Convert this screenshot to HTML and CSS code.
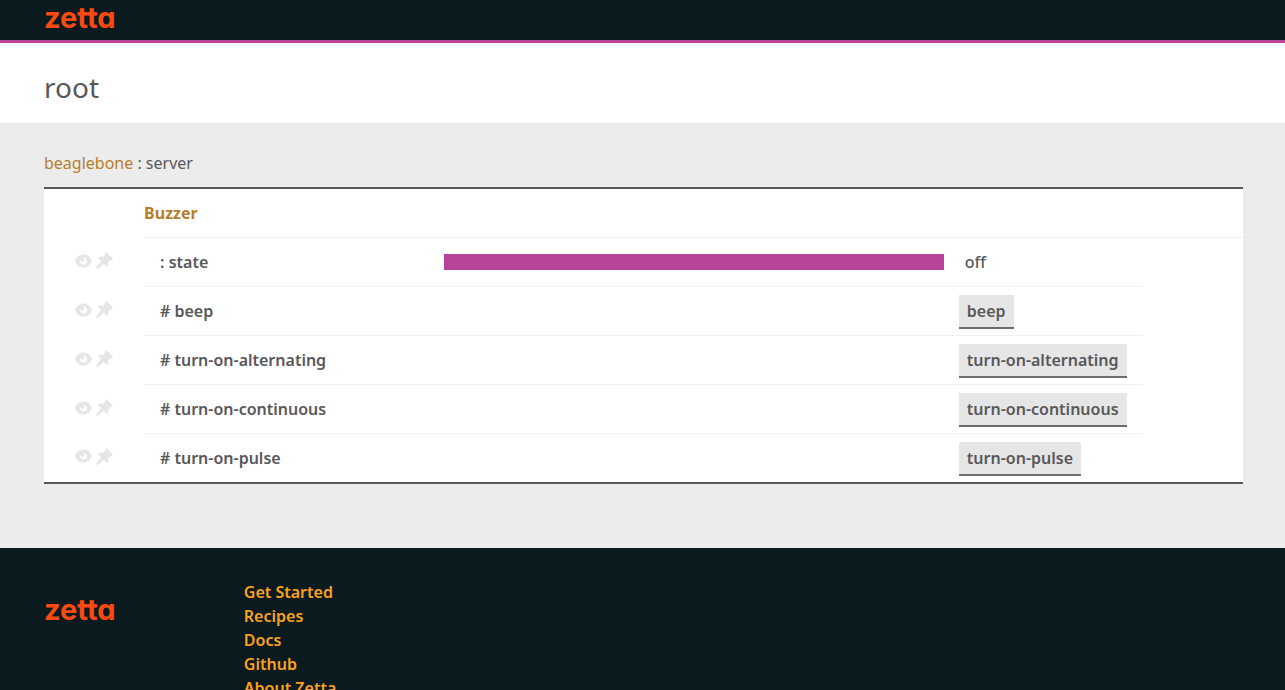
FILE: index.html
```html
<!DOCTYPE html>
<html lang="en">
<head>
<meta charset="utf-8">
<meta name="viewport" content="width=device-width, initial-scale=1">
<title>root</title>
<link rel="stylesheet" href="styles.css">
</head>
<body>
<svg class="sprite" aria-hidden="true">
  <symbol id="eye" viewBox="0 0 17 14">
    <path fill-rule="evenodd" d="M8.500 0.500C4.500 0.500 1.500 3 0 7C1.500 11 4.500 13.500 8.500 13.500S15.500 11 17 7C15.500 3 12.500 0.500 8.500 0.500ZM9 3.500A3.500 3.500 0 1 1 5 7.500Q5 6.500 5.500 6A2 2 0 1 0 8 3.700Q8.500 3.500 9 3.500Z"/>
  </symbol>
  <symbol id="pin" viewBox="0 0 17 17">
    <path d="M10.500 0L17 6.500L15.700 8.300L14.500 8L12.200 10.500C12.700 12.500 12.200 13.700 11 15L7.700 11.800L3 16L0 17L1 14L5.200 9.300L2 6C3.500 4.700 5 4.300 7 4.800L9.200 2.500L9 1.300Z"/>
  </symbol>
</svg>
<header class="topbar"><a class="logo" href="#"><svg class="wordmark" viewBox="0 0 72 36"><text x="0" y="28">zetta</text><path d="M35 14H52"/></svg></a></header>
<div class="heading"><h1 class="title">root</h1></div>
<main class="content">
  <p class="crumb"><a class="link" href="#">beaglebone</a> : server</p>
  <table class="device">
    <colgroup><col class="col-tools"><col class="col-name"><col class="col-graph"><col class="col-action"><col class="col-end"></colgroup>
    <thead>
      <tr><td></td><th class="device-name" colspan="4" scope="colgroup"><a class="link" href="#">Buzzer</a></th></tr>
    </thead>
    <tbody>
      <tr>
        <td><div class="tools"><button class="tool" aria-label="Show state"><svg class="eye"><use href="#eye"/></svg></button><button class="tool" aria-label="Pin state"><svg class="pin"><use href="#pin"/></svg></button></div></td>
        <th class="name line" scope="row">: state</th><td class="line"><div class="bar"></div></td><td class="line value">off</td><td></td>
      </tr>
      <tr>
        <td><div class="tools"><button class="tool" aria-label="Show beep"><svg class="eye"><use href="#eye"/></svg></button><button class="tool" aria-label="Pin beep"><svg class="pin"><use href="#pin"/></svg></button></div></td>
        <th class="name line" scope="row"><span class="hash">#</span>beep</th><td class="line"></td><td class="line action"><button class="run">beep</button></td><td></td>
      </tr>
      <tr>
        <td><div class="tools"><button class="tool" aria-label="Show turn-on-alternating"><svg class="eye"><use href="#eye"/></svg></button><button class="tool" aria-label="Pin turn-on-alternating"><svg class="pin"><use href="#pin"/></svg></button></div></td>
        <th class="name line" scope="row"><span class="hash">#</span>turn-on-alternating</th><td class="line"></td><td class="line action"><button class="run">turn-on-alternating</button></td><td></td>
      </tr>
      <tr>
        <td><div class="tools"><button class="tool" aria-label="Show turn-on-continuous"><svg class="eye"><use href="#eye"/></svg></button><button class="tool" aria-label="Pin turn-on-continuous"><svg class="pin"><use href="#pin"/></svg></button></div></td>
        <th class="name line" scope="row"><span class="hash">#</span>turn-on-continuous</th><td class="line"></td><td class="line action"><button class="run">turn-on-continuous</button></td><td></td>
      </tr>
      <tr>
        <td><div class="tools"><button class="tool" aria-label="Show turn-on-pulse"><svg class="eye"><use href="#eye"/></svg></button><button class="tool" aria-label="Pin turn-on-pulse"><svg class="pin"><use href="#pin"/></svg></button></div></td>
        <th class="name" scope="row"><span class="hash">#</span>turn-on-pulse</th><td></td><td class="action"><button class="run">turn-on-pulse</button></td><td></td>
      </tr>
    </tbody>
  </table>
</main>
<footer class="footer">
  <a class="logo" href="#"><svg class="wordmark" viewBox="0 0 72 36"><text x="0" y="28">zetta</text><path d="M35 14H52"/></svg></a>
  <nav class="links"><a href="#">Get Started</a><a href="#">Recipes</a><a href="#">Docs</a><a href="#">Github</a><a href="#">About Zetta</a></nav>
</footer>
</body>
</html>
```
FILE: styles.css
```css
* { box-sizing: border-box; }
html { scrollbar-width: none; }
body {
  margin: 0;
  background: #ececec;
  color: #58585a;
  font: 400 16px/24px "Noto Sans", sans-serif;
}
a { text-decoration: none; }
.sprite { display: none; }
.topbar {
  height: 43px;
  padding: 0 44px;
  background: #0b1a1f;
  border-bottom: 3px solid #b9429b;
}
.logo { display: block; }
.wordmark {
  display: block;
  width: 72px;
  height: 36px;
  fill: #f84a12;
  font: 700 29px Inter, sans-serif;
  font-feature-settings: "cv11";
}
.wordmark path { stroke: #f84a12; stroke-width: 3px; stroke-linecap: round; }
.heading { padding: 24px 44px 16px; background: #fff; }
.title { margin: 0; font-size: 28px; line-height: 40px; font-weight: 400; }
.content { padding: 28px 42px 64px 44px; }
.crumb { margin: 0 0 12px; }
.link { color: #b77e28; }
.device {
  width: 100%;
  table-layout: fixed;
  border-collapse: separate;
  border-spacing: 0;
  background: #fff;
  border-top: 2px solid #58585a;
  border-bottom: 2px solid #58585a;
}
.col-tools { width: 8.35%; }
.col-name { width: 25%; }
.col-graph { width: 41.7%; }
.col-action { width: 16.6%; }
.device td, .device th {
  height: 49px;
  padding: 0;
  text-align: left;
  font-weight: 600;
  vertical-align: middle;
}
.device tbody tr:last-child td, .device tbody tr:last-child th { height: 48px; }
.device .line { border-bottom: 1px solid #f0f0f0; }
.device .device-name { border-bottom: 1px solid #f0f0f0; font-weight: 700; }
.device .name { padding-left: 16px; }
.hash { margin-right: 4px; }
.device .value { padding-left: 21px; font-weight: 500; }
.device .action { padding: 2px 0 0 15px; }
.tools { display: flex; align-items: center; gap: 4px; padding: 0 0 4px 31px; }
.tool { display: flex; padding: 0; border: 0; background: none; color: #e6e6e6; }
.tool svg { fill: currentColor; }
.eye { width: 17px; height: 14px; }
.pin { width: 17px; height: 17px; }
.bar { height: 16px; background: #b9429b; }
.run {
  display: block;
  height: 34px;
  padding: 0 8px;
  border: 0;
  border-bottom: 2px solid #6c6c6e;
  background: #e6e6e6;
  color: inherit;
  font: inherit;
  white-space: nowrap;
}
.footer {
  display: grid;
  grid-template-columns: 1fr 5fr;
  padding: 32px 42px 32px 44px;
  background: #0b1a1f;
}
.footer .logo { padding-top: 12px; }
.links { display: flex; flex-direction: column; align-items: flex-start; }
.links a { color: #faa21e; font-weight: 600; }
```
